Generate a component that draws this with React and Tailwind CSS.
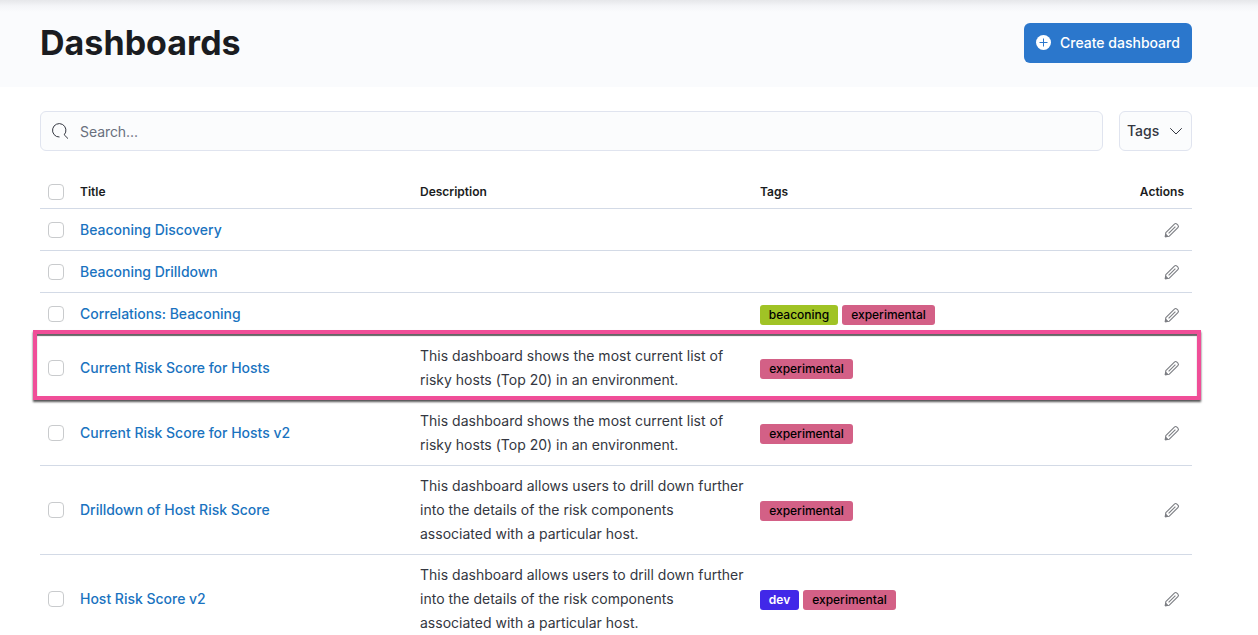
const TAG_STYLES = {
  beaconing: 'w-[78px] bg-[#a0c325] text-black font-medium',
  experimental: 'w-[93px] bg-[#d36086] text-black font-medium',
  dev: 'w-[39px] bg-[#4128e8] text-white font-semibold',
};

const CURRENT = ['This dashboard shows the most current list of', 'risky hosts (Top 20) in an environment.'];
const DRILL = [
  'This dashboard allows users to drill down further',
  'into the details of the risk components',
  'associated with a particular host.',
];

const ROWS = [
  { title: 'Beaconing Discovery', h: 'h-[42px]', lines: [], tags: [] },
  { title: 'Beaconing Drilldown', h: 'h-[42px]', lines: [], tags: [] },
  { title: 'Correlations: Beaconing', h: 'h-[43px]', lines: [], tags: ['beaconing', 'experimental'] },
  { title: 'Current Risk Score for Hosts', h: 'h-[65px]', lines: CURRENT, tags: ['experimental'], highlighted: true },
  { title: 'Current Risk Score for Hosts v2', h: 'h-[65px]', lines: CURRENT, tags: ['experimental'] },
  { title: 'Drilldown of Host Risk Score', h: 'h-[89px]', lines: DRILL, tags: ['experimental'] },
  { title: 'Host Risk Score v2', h: 'h-[89px]', lines: DRILL, tags: ['dev', 'experimental'] },
];

function Checkbox() {
  return <span className="block size-4 rounded-[4px] border border-[#c9cbcd] bg-white" />;
}

function Pencil() {
  return (
    <svg className="size-4" viewBox="0 0 16 16" fill="none" stroke="#7c7e83" strokeWidth="1.1" strokeLinejoin="round">
      <path d="M1.300 14.700 1.800 10.700 10.400 2.100a1.800 1.800 0 0 1 2.500 0l1 1a1.800 1.800 0 0 1 0 2.500L5.300 14.200z" />
      <path d="M4.600 11.400 11.400 4.600" />
      <path d="M1.300 14.700 1.600 12.200 3.800 14.400z" fill="#7c7e83" />
    </svg>
  );
}

function Row({ row }) {
  return (
    <div className={`relative flex shrink-0 items-center border-b border-[#d3dae6] ${row.h}`}>
      <div className="w-10 pl-2"><Checkbox /></div>
      <div className="w-[340px] text-[14px] leading-6 font-medium tracking-[-0.001em] text-[#1a73c0]">{row.title}</div>
      <div className="w-[340px] text-[14px] leading-6 tracking-[0.0005em] text-[#343741]">
        {row.lines.map((line) => <div key={line} className="whitespace-nowrap">{line}</div>)}
      </div>
      <div className="flex flex-1 gap-1 pt-[2px]">
        {row.tags.map((tag) => (
          <span key={tag} className={`flex h-5 items-center justify-center rounded-[3px] text-[12px] ${TAG_STYLES[tag]}`}>
            {tag}
          </span>
        ))}
      </div>
      <div className={row.h === 'h-[43px]' ? 'pt-px pr-3' : 'pr-3'}><Pencil /></div>
      {row.highlighted && (
        <div className="pointer-events-none absolute -top-[6px] -left-[7px] z-10 h-[70px] w-[1168px] border-4 border-[#f04e98] shadow-[0_2px_2px_#555,inset_0_2px_1px_#666]" />
      )}
    </div>
  );
}

export default function App() {
  return (
    <div className="flex h-[635px] w-[1258px] flex-col overflow-hidden bg-white font-['Inter','Liberation_Sans',sans-serif] text-[#343741]">
      <header className="relative flex h-[87px] shrink-0 items-start justify-between bg-[#fafbfd] pr-[66px] pl-10">
        <div className="absolute inset-x-0 top-0 h-3 bg-linear-to-b from-[#e6e7ea] via-[#f4f5f8] to-[#fafbfd]" />
        <h1 className="relative mt-[23px] text-[34px] leading-10 font-bold tracking-[0.001em] text-[#1a1c21]">Dashboards</h1>
        <button className="relative mt-[23px] flex h-10 w-[168px] items-center rounded-md bg-[#2b77cc] pl-3 text-[14px] font-medium text-white">
          <svg className="mr-2 size-4" viewBox="0 0 16 16">
            <circle cx="7.500" cy="7.500" r="7.500" fill="white" />
            <path d="M7.500 3.500v8M3.500 7.500h8" stroke="#2b77cc" />
          </svg>
          <span className="pb-px whitespace-nowrap">Create dashboard</span>
        </button>
      </header>
      <main className="flex flex-col pt-6 pr-[66px] pl-10">
        <div className="flex h-10 shrink-0 gap-4">
          <div className="flex flex-1 items-center rounded-md border border-[#e0e4ef] bg-[#fbfcfd] pl-[11px] text-[14px] tracking-[-0.005em] text-[#69707d]">
            <svg className="mr-3 size-4" viewBox="0 0 16 16" fill="none" stroke="#343741">
              <path d="M7.500 14A6.700 6.700 0 1 1 12.200 11.800L16 15.600" />
            </svg>
            Search...
          </div>
          <div className="flex w-[73px] items-center rounded-md border border-[#e0e4ef] bg-[#fbfcfd] pl-[7px] text-[14px] font-medium">
            <span className="pb-px">Tags</span>
            <svg className="ml-[9px] size-4" viewBox="0 0 16 16" fill="none" stroke="#343741" strokeLinecap="round" strokeLinejoin="round">
              <path d="m2.500 5.500 5.500 5.500 5.500-5.500" />
            </svg>
          </div>
        </div>
        <div className="mt-6 flex h-[34px] shrink-0 items-center border-b border-[#d3dae6] text-[12px] font-semibold text-[#1a1c21]">
          <div className="w-10 pl-2"><Checkbox /></div>
          <div className="w-[340px]">Title</div>
          <div className="w-[340px]">Description</div>
          <div className="flex-1">Tags</div>
          <div className="pr-2">Actions</div>
        </div>
        {ROWS.map((row) => <Row key={row.title} row={row} />)}
      </main>
    </div>
  );
}
